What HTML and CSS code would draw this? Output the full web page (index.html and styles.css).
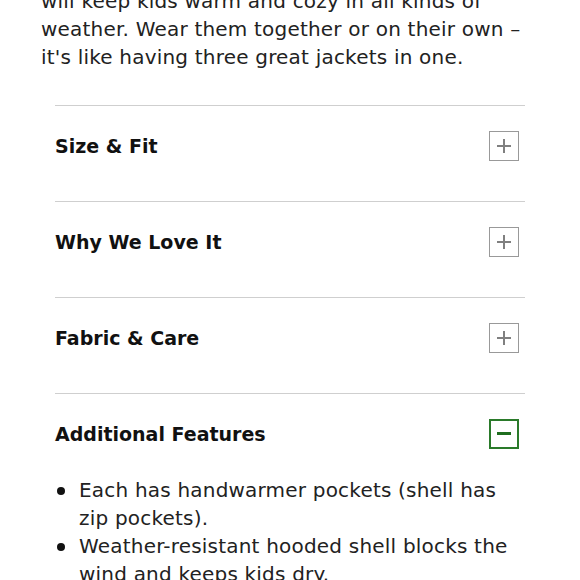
FILE: index.html
```html
<!DOCTYPE html>
<html lang="en">
<head>
    <meta charset="UTF-8">
    <meta name="viewport" content="width=device-width, initial-scale=1.0">
    <title>Product Details</title>
    <link rel="stylesheet" href="styles.css">
</head>
<body>

<div class="details">
    <p class="intro">will keep kids warm and cozy in all kinds of weather. Wear them together or on their own – it's like having three great jackets in one.</p>

    <div class="accordion">
        <div class="panel">
            <div class="panel-head">
                <h3>Size &amp; Fit</h3>
                <span class="toggle"><span class="bar-h"></span><span class="bar-v"></span></span>
            </div>
        </div>
        <div class="panel">
            <div class="panel-head">
                <h3>Why We Love It</h3>
                <span class="toggle"><span class="bar-h"></span><span class="bar-v"></span></span>
            </div>
        </div>
        <div class="panel">
            <div class="panel-head">
                <h3>Fabric &amp; Care</h3>
                <span class="toggle"><span class="bar-h"></span><span class="bar-v"></span></span>
            </div>
        </div>
        <div class="panel open">
            <div class="panel-head">
                <h3>Additional Features</h3>
                <span class="toggle"><span class="bar-h"></span></span>
            </div>
            <ul class="features">
                <li>Each has handwarmer pockets (shell has zip pockets).</li>
                <li>Weather-resistant hooded shell blocks the wind and keeps kids dry.</li>
            </ul>
        </div>
    </div>
</div>

</body>
</html>
```

FILE: styles.css
```css
body {
    margin: 0;
    padding: 0;
    background: #fff;
    color: #222;
    font-family: "DejaVu Sans", Verdana, sans-serif;
    overflow: hidden;
}

.details {
    padding: 0 41px;
}

.intro {
    margin: -13px 0 0;
    font-size: 20px;
    line-height: 28px;
    letter-spacing: 0.2px;
}

.accordion {
    margin: 34px 14px 0;
}

.panel {
    border-top: 1px solid #cfcfcf;
    padding: 25px 0 40px;
}

.panel-head {
    height: 30px;
    display: flex;
    align-items: center;
    justify-content: space-between;
    padding-right: 6px;
}

.panel-head h3 {
    margin: 0;
    font-size: 19px;
    font-weight: bold;
    color: #111;
}

/* Plus / minus toggle box */
.toggle {
    position: relative;
    width: 28px;
    height: 28px;
    border: 1px solid #999;
}

.bar-h,
.bar-v {
    position: absolute;
    background: #808080;
}

.bar-h {
    left: 7px;
    top: 13px;
    width: 14px;
    height: 2px;
}

.bar-v {
    left: 13px;
    top: 7px;
    width: 2px;
    height: 14px;
}

.open .toggle {
    border: 2px solid #2a7a2a;
    width: 26px;
    height: 26px;
}

.open .bar-h {
    background: #1f6e1f;
    top: 11px;
    left: 6px;
    height: 3px;
}

.features {
    list-style: none;
    margin: 27px 0 0;
    padding: 0 0 0 24px;
    font-size: 20px;
    line-height: 28px;
    letter-spacing: 0.2px;
}

.features li {
    position: relative;
}

.features li::before {
    content: "";
    position: absolute;
    left: -22px;
    top: 11px;
    width: 8px;
    height: 8px;
    border-radius: 50%;
    background: #111;
}
```
